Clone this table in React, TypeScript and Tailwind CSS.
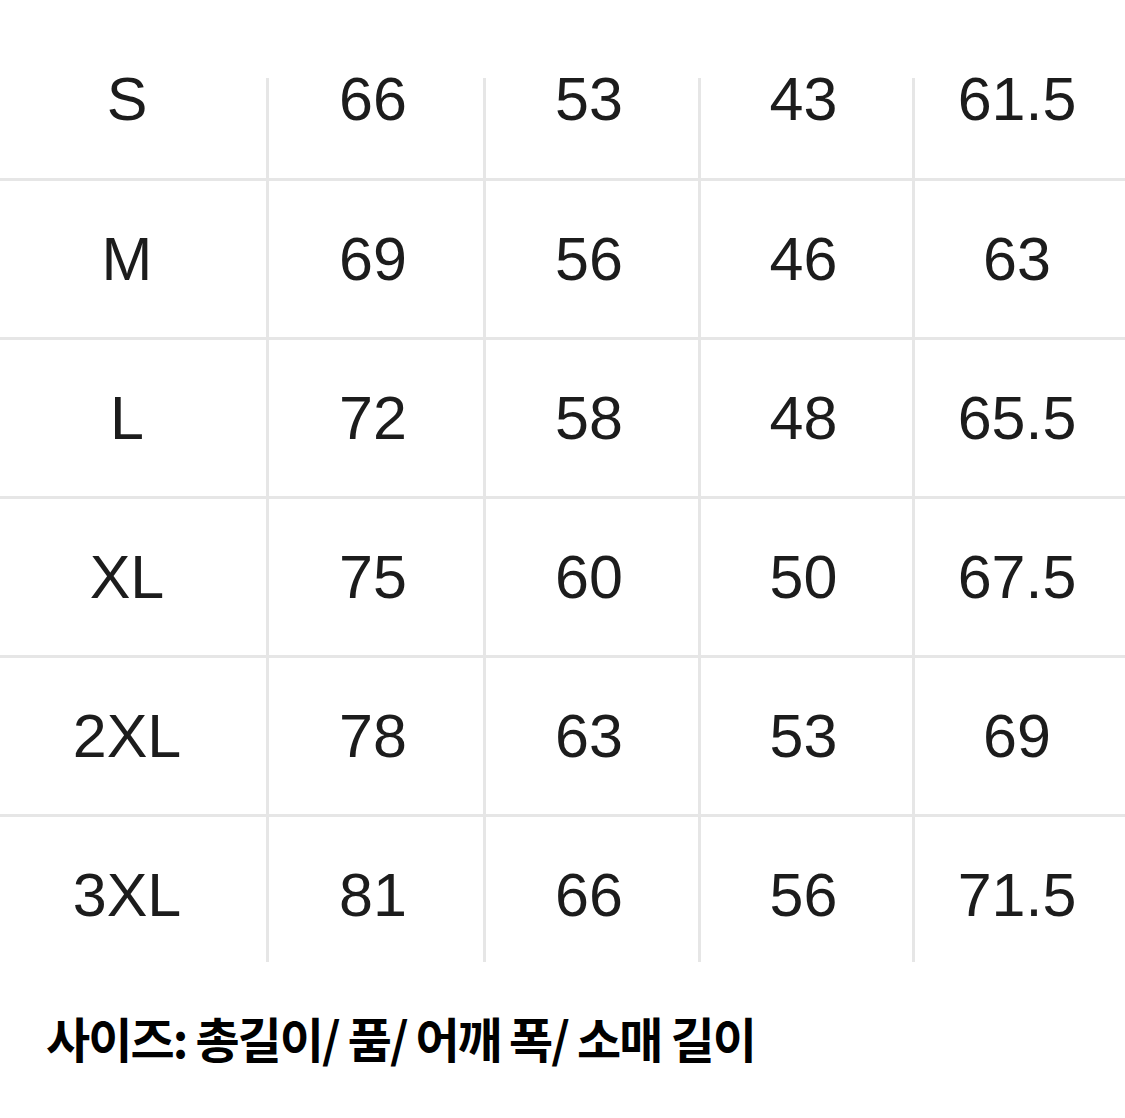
const rows: string[][] = [
  ["S", "66", "53", "43", "61.5"],
  ["M", "69", "56", "46", "63"],
  ["L", "72", "58", "48", "65.5"],
  ["XL", "75", "60", "50", "67.5"],
  ["2XL", "78", "63", "53", "69"],
  ["3XL", "81", "66", "56", "71.5"],
];

// vertical rule is drawn as a background so the first and last rows can show only part of it
const lineFirst = "bg-[linear-gradient(#e6e6e6,#e6e6e6)] bg-no-repeat bg-[length:3px_100px] bg-bottom-left";
const lineMid = "bg-[linear-gradient(#e6e6e6,#e6e6e6)] bg-no-repeat bg-[length:3px_100%] bg-top-left";
const lineLast = "bg-[linear-gradient(#e6e6e6,#e6e6e6)] bg-no-repeat bg-[length:3px_145px] bg-top-left";

export default function App() {
  return (
    <div className="w-[1125px] h-[1118px] bg-white pt-[21px] font-['Liberation_Sans',Arial,sans-serif] text-[#1c1c1c]">
      <div className="flex flex-col">
        {rows.map((row, i) => {
          const first = i === 0;
          const last = i === rows.length - 1;
          const line = first ? lineFirst : last ? lineLast : lineMid;
          return (
            <div
              key={row[0]}
              className={
                "grid grid-cols-[266px_217px_215px_214px_1fr] " +
                (first ? "h-[157px]" : "h-[159px] border-t-[3px] border-[#e6e6e6]")
              }
            >
              {row.map((v, j) => (
                <div
                  key={j}
                  className={
                    "flex items-center justify-center text-[61px] leading-none " +
                    (j === 0 ? "pr-[12px]" : line + " pr-[3px]")
                  }
                >
                  {v}
                </div>
              ))}
            </div>
          );
        })}
      </div>
      <div className="pl-[46px] pt-[40px] text-[48px] font-bold leading-none tracking-[-0.04em] text-black font-['Noto_Sans_CJK_KR','Noto_Sans',sans-serif]">
        사이즈: 총길이/ 품/ 어깨 폭/ 소매 길이
      </div>
    </div>
  );
}
